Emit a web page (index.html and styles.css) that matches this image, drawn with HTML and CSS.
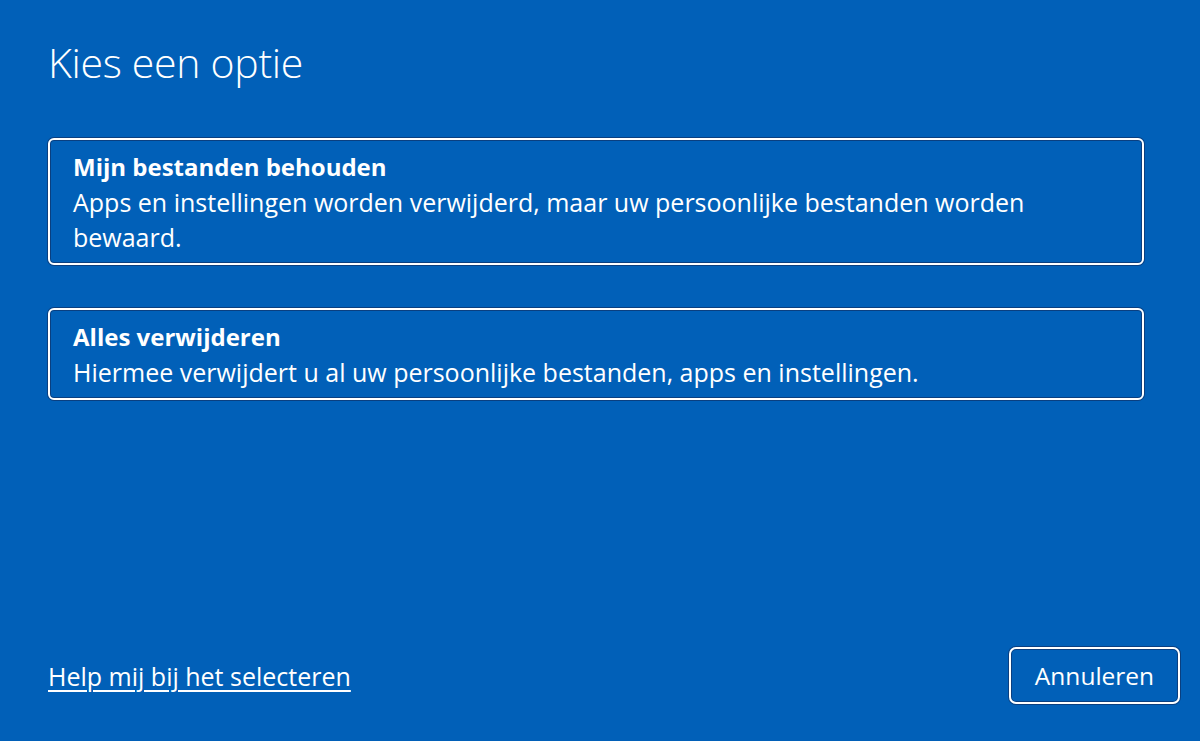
FILE: index.html
```html
<!DOCTYPE html>
<html lang="nl">
<head>
<meta charset="utf-8">
<title>Kies een optie</title>
<link rel="stylesheet" href="styles.css">
</head>
<body>
<main class="screen">
  <h1 class="title">Kies een optie</h1>
  <div class="options">
    <button class="option">
      <span class="option-title">Mijn bestanden behouden</span>
      <span class="option-desc">Apps en instellingen worden verwijderd, maar uw persoonlijke bestanden worden bewaard.</span>
    </button>
    <button class="option">
      <span class="option-title">Alles verwijderen</span>
      <span class="option-desc">Hiermee verwijdert u al uw persoonlijke bestanden, apps en instellingen.</span>
    </button>
  </div>
  <footer class="footer">
    <a class="help" href="#">Help mij bij het selecteren</a>
    <button class="cancel">Annuleren</button>
  </footer>
</main>
</body>
</html>
```
FILE: styles.css
```css
html, body {
  margin: 0;
  padding: 0;
  background: #0160b8;
}
body {
  font-family: "Open Sans", "Noto Sans", sans-serif;
  color: #ffffff;
}
.screen {
  height: 741px;
  box-sizing: border-box;
  display: flex;
  flex-direction: column;
  padding: 0 20px 0 48px;
}
.title {
  margin: 34px 0 0 0;
  font-weight: 300;
  font-size: 41px;
  line-height: 56px;
  letter-spacing: -0.3px;
}
.options {
  margin-top: 48px;
  margin-right: 36px;
  display: flex;
  flex-direction: column;
  gap: 42.5px;
}
.option {
  display: flex;
  flex-direction: column;
  align-items: flex-start;
  text-align: left;
  background: transparent;
  color: #ffffff;
  font-family: inherit;
  border: 2.5px solid #ffffff;
  border-radius: 6px;
  box-shadow: 0 0 0 1px #0a3f80, inset 0 0 0 1px #0a3f80;
  padding: 9px 60px 8px 23px;
  margin: 0;
  cursor: pointer;
}
.option-title {
  font-weight: 700;
  font-size: 24px;
  line-height: 36px;
}
.option-desc {
  font-size: 25px;
  line-height: 35px;
}
.footer {
  margin-top: auto;
  margin-bottom: 37px;
  display: flex;
  justify-content: space-between;
  align-items: center;
}
.help {
  color: #ffffff;
  font-size: 25px;
  text-decoration: underline;
  text-underline-offset: 4px;
  text-decoration-thickness: 2px;
}
.cancel {
  width: 171px;
  height: 57px;
  background: transparent;
  color: #ffffff;
  font-family: inherit;
  font-size: 24.5px;
  border: 2.5px solid #ffffff;
  border-radius: 7px;
  box-shadow: 0 0 0 1px #0a3f80, inset 0 0 0 1px #0a3f80;
  cursor: pointer;
}
```
